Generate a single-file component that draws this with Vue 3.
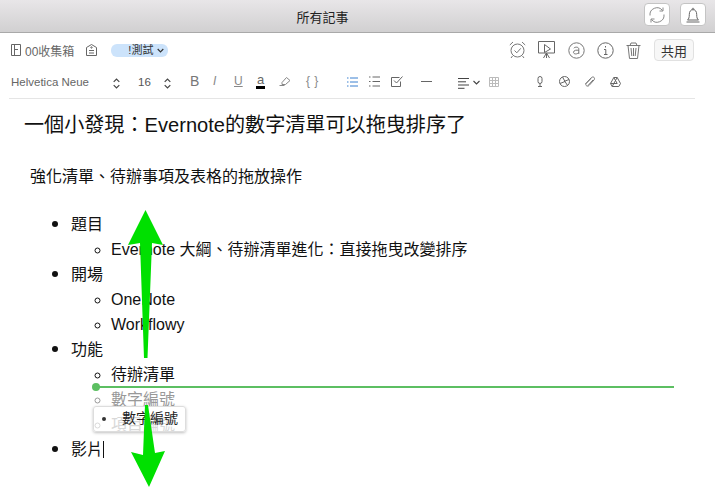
<template>
  <div class="app">
    <header class="titlebar">
      <div class="title">所有記事</div>
      <div class="tb-buttons">
        <button class="tb-btn">
          <svg width="18" height="18" viewBox="0 0 18 18" fill="none" stroke="#888" stroke-width="1">
            <path d="M2 9.500A7 7 0 0 1 14.500 4.500" />
            <path d="M16 8.500A7 7 0 0 1 3.500 13.500" />
            <path d="M15 1.500v3.500h-3.500M3 16.500v-3.500h3.500" />
          </svg>
        </button>
        <button class="tb-btn">
          <svg width="18" height="18" viewBox="0 0 18 18" fill="none" stroke="#666" stroke-width="1">
            <path d="M3.500 14c1.300-1 1.800-2.500 1.800-5.500 0-3 1.300-4.800 3.700-4.800s3.700 1.800 3.700 4.800c0 3 .5 4.500 1.800 5.500z" />
            <path d="M2.500 16h13M8 3.700c0-2 2-2 2 0" />
          </svg>
        </button>
      </div>
    </header>

    <div class="toolbars">
      <div class="row-one">
        <div class="notebook">
          <svg width="10" height="12" viewBox="0 0 10 12" fill="none" stroke="#666"><path d="M.5.500h9v11h-9zM3.500.500v11M3.500 5.500h3.500" /></svg>
          <span>00收集箱</span>
        </div>
        <svg class="tag-ic" width="11" height="12" viewBox="0 0 11 12" fill="none" stroke="#666"><path d="M.5 3.500L5.500.500l5 3v8H.5z" /><path d="M3 6.500h5M3 9h5" /><circle cx="5.500" cy="3.500" r=".7" /></svg>
        <div class="tag"><span>!測試</span><svg width="7" height="5" viewBox="0 0 7 5" fill="none" stroke="#333" stroke-width="1.200"><path d="M.7 1l2.800 2.800L6.300 1" /></svg></div>
        <div class="spacer"></div>
        <div class="actions">
          <svg width="17" height="18" viewBox="0 0 17 18" fill="none" stroke="#777"><circle cx="8.500" cy="9.500" r="6.500" /><path d="M5.500 9.500l2.300 2.300 4-4.500M.8 4L4 1M16.200 4L13 1M3.500 15l-1.500 2M13.500 15l1.500 2" /></svg>
          <svg width="18" height="18" viewBox="0 0 18 18" fill="none" stroke="#666"><path d="M.5.500h16v11.500H.5z" /><path d="M6.500 3.500l6 4.500-6 3.500zM8.500 12l-3 5M8.500 12l3 5M8.500 12v5" /></svg>
          <svg width="17" height="17" viewBox="0 0 17 17" fill="none" stroke="#777"><circle cx="8.500" cy="8.500" r="7.700" /><path d="M5.800 6.200c1-1.500 5-1.500 5 .8v5M10.800 8.500c-2-.8-5.300-.3-5.300 1.800s3.700 2.200 5.300.2" /></svg>
          <svg width="17" height="17" viewBox="0 0 17 17" fill="none" stroke="#666"><circle cx="8.500" cy="8.500" r="7.700" /><path d="M7 7.500h1.800v5M7 12.500h3.500M8.500 4v1.500" /></svg>
          <svg width="15" height="17" viewBox="0 0 15 17" fill="none" stroke="#777"><path d="M.5 3.500h14M2 3.500l1.500 13h8L13 3.500M5 1h5l1 2.500H4zM5 6l.8 8M7.500 6v8M10 6l-.8 8" /></svg>
        </div>
        <button class="share">共用</button>
      </div>

      <div class="row-two">
        <span class="font-name">Helvetica Neue</span>
        <svg class="stepper st1" width="7" height="11" viewBox="0 0 7 11" fill="none" stroke="#444" stroke-width="1.200"><path d="M.7 3.800L3.500 1l2.800 2.800M.7 7.200L3.500 10l2.800-2.800" /></svg>
        <span class="font-size">16</span>
        <svg class="stepper st2" width="7" height="11" viewBox="0 0 7 11" fill="none" stroke="#444" stroke-width="1.200"><path d="M.7 3.800L3.500 1l2.800 2.800M.7 7.200L3.500 10l2.800-2.800" /></svg>
        <span class="fmt b">B</span>
        <span class="fmt i">I</span>
        <span class="fmt u">U</span>
        <span class="fmt a">a</span>
        <svg class="hl" width="12" height="10" viewBox="0 0 12 10" fill="none" stroke="#888"><path d="M3 6.500L7.500 1.500 11 4.500 6.500 8.500H3zM.5 9.500h5" /></svg>
        <span class="fmt braces">{ }</span>
        <svg class="ul" width="11" height="10" viewBox="0 0 11 10" fill="none" stroke="#3a80d0"><path d="M0 1h1.500M3 1h8M0 5h1.500M3 5h8M0 9h1.500M3 9h8" /></svg>
        <svg class="ol" width="11" height="11" viewBox="0 0 11 11" fill="none" stroke="#666"><path d="M0 1h1.500M3.500 1h7.500M0 5.500h1.500M3.500 5.500h7.500M0 10h1.500M3.500 10h7.500" /></svg>
        <svg class="chk" width="12" height="11" viewBox="0 0 12 11" fill="none" stroke="#666"><path d="M9.500 5.500v5H.5v-9h8" /><path d="M3 4.500l2.500 2.500L11.500.500" /></svg>
        <div class="hr"></div>
        <svg class="al" width="11" height="11" viewBox="0 0 11 11" fill="none" stroke="#444"><path d="M0 .5h11M0 3.800h8M0 7h11M0 10.300h6.500" /></svg>
        <svg class="alc" width="7" height="5" viewBox="0 0 7 5" fill="none" stroke="#444" stroke-width="1.100"><path d="M.5 1l3 3 3-3" /></svg>
        <svg class="tbl" width="10" height="10" viewBox="0 0 10 10" fill="none" stroke="#bbb"><path d="M.5.500h9v9h-9zM.5 3.500h9M.5 6.500h9M3.500.500v9M6.500.500v9" /></svg>
        <svg class="mic" width="6" height="11" viewBox="0 0 6 11" fill="none" stroke="#666"><rect x="1" y=".5" width="4" height="7" rx="2" /><path d="M3 7.500v3M1 10.500h4" /></svg>
        <svg class="cam" width="11" height="11" viewBox="0 0 11 11" fill="none" stroke="#666"><circle cx="5.500" cy="5.500" r="5" /><path d="M3.500 1L6 5.500M10 3.500L5 5.500M8.500 9.500L6 5.500M1 7.500L6 5.500" /></svg>
        <svg class="clip" width="12" height="11" viewBox="0 0 12 11" fill="none" stroke="#777"><path d="M1.500 8L7.500 1.500c2-1.500 4 .5 2.500 2.500L5 9.500C3.500 11 1 9.500 2 7.500l5-5M4 9.500l5-5.500" /></svg>
        <svg class="gd" width="11" height="10" viewBox="0 0 11 10" fill="none" stroke="#666"><path d="M3.800.500h3.400l3.300 6-1.700 3H2.200L.5 6.500zM3.800.500L7.200 6.500H.5M7.200.500L3.800 6.500 2.200 9.500" /></svg>
      </div>
      <div class="divider"></div>
    </div>

    <main class="note">
      <h1>一個小發現：Evernote的數字清單可以拖曳排序了</h1>
      <p class="lead">強化清單、待辦事項及表格的拖放操作</p>
      <ul class="outer">
        <li>題目
          <ul><li>Evernote 大綱、待辦清單進化：直接拖曳改變排序</li></ul>
        </li>
        <li>開場
          <ul><li>OneNote</li><li>Workflowy</li></ul>
        </li>
        <li>功能
          <ul>
            <li>待辦清單</li>
            <li class="ghost">數字編號</li>
            <li class="ghost faint">項目編號</li>
          </ul>
        </li>
        <li>影片<span class="caret"></span></li>
      </ul>

      <div class="dropline"><span class="drop-dot"></span></div>
      <div class="drag-chip"><span class="chip-dot"></span>數字編號</div>

      <svg class="arrows" width="715" height="493" viewBox="0 0 715 493">
        <path d="M145.500 210 L163 245 L152 243 L147.500 358 L144 358 L140 243 L128 245 Z" fill="#00e000" />
        <path d="M145 405 L148 405 L155 453 L165 451 L149 487 L131 452 L143 455 Z" fill="#00e000" />
      </svg>
    </main>
  </div>
</template>

<script setup>
</script>

<style>
html, body { margin: 0; padding: 0; background: #fff; }
</style>

<style scoped>
.app {
  width: 715px;
  height: 493px;
  overflow: hidden;
  position: relative;
  background: #fff;
  font-family: "Liberation Sans", "Noto Sans CJK TC", sans-serif;
  color: #111;
}
.titlebar {
  height: 33px;
  box-sizing: border-box;
  padding-right: 70px;
  border-bottom: 1px solid #a9a9a9;
  background: linear-gradient(#e8e6e8, #d1d0d1);
  display: flex;
  align-items: center;
  justify-content: center;
  position: relative;
}
.title { font-size: 13px; color: #222; }
.tb-buttons { position: absolute; right: 9px; top: 3px; display: flex; gap: 10px; }
.tb-btn {
  width: 26px;
  height: 23px;
  padding: 0;
  border: 1px solid #c4c4c4;
  border-radius: 4px;
  background: #fff;
  display: flex;
  align-items: center;
  justify-content: center;
}
.toolbars { padding: 0 20px 0 9px; }
.row-one {
  height: 34px;
  display: flex;
  align-items: center;
  padding-left: 2px;
  font-size: 12px;
  color: #666;
}
.notebook { display: flex; align-items: center; gap: 4px; }
.tag-ic { margin-left: 12px; }
.tag {
  margin-left: 14px;
  width: 57px;
  height: 13px;
  box-sizing: border-box;
  padding: 0 4px 0 17px;
  border-radius: 6px;
  background: #cce3fb;
  color: #333;
  font-size: 11px;
  line-height: 13px;
  white-space: nowrap;
  display: flex;
  align-items: center;
  justify-content: space-between;
}
.spacer { flex: 1; }
.actions { display: flex; align-items: center; gap: 12px; margin-right: 13px; }
.share {
  width: 40px;
  height: 22px;
  padding: 0;
  border: 1px solid #e1e1e1;
  border-radius: 4px;
  background: #f7f7f7;
  font: 13px "Liberation Sans", "Noto Sans CJK TC", sans-serif;
  color: #333;
  margin-right: 1px;
}
.row-two {
  height: 31px;
  position: relative;
  font-size: 11.500px;
  color: #666;
}
.row-two > * { position: absolute; }
.font-name { left: 2px; top: 9px; }
.st1 { left: 104px; top: 11px; }
.font-size { left: 129px; top: 9px; font-size: 11.500px; color: #555; }
.st2 { left: 155px; top: 11px; }
.fmt { top: 8px; color: #888; font-size: 11px; }
.b { left: 181px; font-weight: 400; font-size: 14px; top: 6px; color: #777; }
.i { left: 204px; font-style: italic; font-size: 12px; top: 7px; }
.u { left: 225px; text-decoration: underline; font-size: 12px; top: 7px; }
.a { left: 247px; top: 6px; font-size: 13px; color: #666; border-bottom: 3px solid #000; line-height: 13px; padding: 0 1px; }
.hl { left: 270px; top: 9px; }
.braces { left: 297px; font-size: 12px; top: 7px; letter-spacing: .5px; }
.ul { left: 338px; top: 10px; }
.ol { left: 360px; top: 9px; }
.chk { left: 382px; top: 9px; }
.hr { left: 412px; top: 14px; width: 11px; height: 1px; background: #666; }
.al { left: 449px; top: 11px; }
.alc { left: 464px; top: 13px; }
.tbl { left: 480px; top: 10px; }
.mic { left: 528px; top: 9px; }
.cam { left: 550px; top: 9px; }
.clip { left: 575px; top: 9px; }
.gd { left: 601px; top: 10px; }
.divider { height: 1px; background: #e5e5e5; }

.note { position: relative; }
h1 {
  margin: 0;
  padding: 14px 0 0 24px;
  font-size: 20.100px;
  font-weight: 400;
  line-height: 25px;
  color: #111;
}
.lead {
  margin: 26px 0 0 30px;
  font-size: 16px;
  line-height: 25px;
}
.outer {
  margin: 23px 0 0;
  padding: 0 0 0 71px;
  list-style: none;
  font-size: 16px;
  line-height: 25px;
}
.outer > li { position: relative; }
.outer > li::before {
  content: "";
  position: absolute;
  left: -19px;
  top: 9px;
  width: 6px;
  height: 6px;
  border-radius: 50%;
  background: #111;
}
.outer ul { margin: 0; padding: 0 0 0 40px; list-style: circle; }
.ghost { color: #999; }
.faint { color: #c4c4c4; }
.caret {
  display: inline-block;
  width: 1px;
  height: 17px;
  background: #111;
  vertical-align: -3px;
}
.dropline {
  position: absolute;
  left: 96px;
  top: 287px;
  width: 578px;
  height: 2px;
  background: #5cbf62;
}
.drop-dot {
  position: absolute;
  left: -4px;
  top: -3px;
  width: 8px;
  height: 8px;
  border-radius: 50%;
  background: #5cbf62;
}
.drag-chip {
  position: absolute;
  left: 93px;
  top: 307px;
  width: 93px;
  height: 26px;
  box-sizing: border-box;
  padding-left: 28px;
  border: 1px solid #ddd;
  border-radius: 3px;
  background: rgba(255, 255, 255, .35);
  box-shadow: 0 1px 3px rgba(0, 0, 0, .25);
  font-size: 14px;
  line-height: 23px;
  color: #222;
}
.chip-dot {
  position: absolute;
  left: 8px;
  top: 10px;
  width: 4px;
  height: 4px;
  border-radius: 50%;
  background: #333;
}
.arrows { position: absolute; left: 0; top: -99px; pointer-events: none; }
</style>
